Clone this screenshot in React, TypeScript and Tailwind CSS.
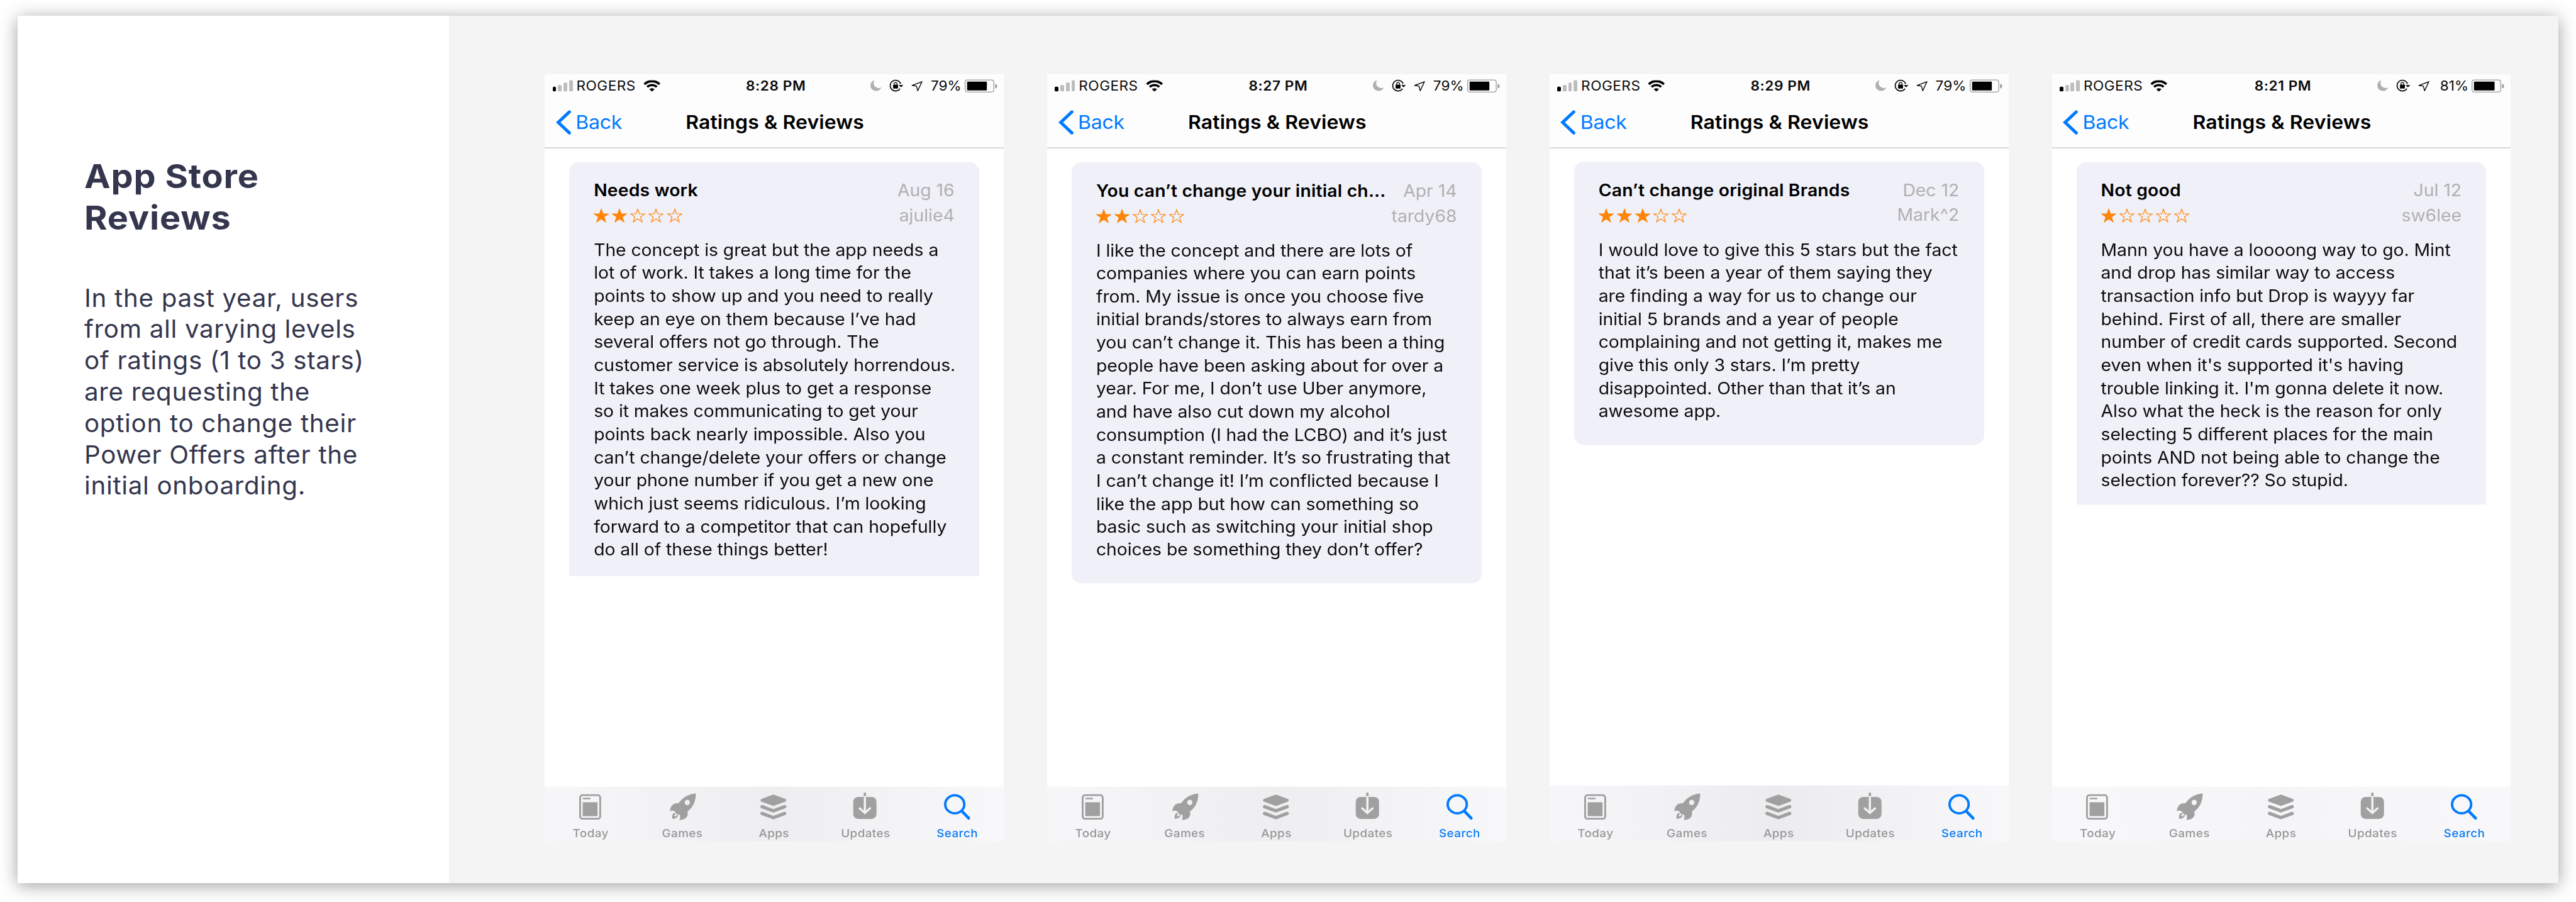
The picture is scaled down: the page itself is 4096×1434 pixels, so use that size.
import type { ReactNode } from "react";

type Review = {
  time: string;
  battery: string;
  charge: number;
  title: string;
  date: string;
  author: string;
  stars: number;
  lines: string[];
  cardClass: string;
  tabClass: string;
};

const reviews: Review[] = [
  {
    time: "8:28 PM",
    battery: "79%",
    charge: 136,
    title: "Needs work",
    date: "Aug 16",
    author: "ajulie4",
    stars: 2,
    lines: [
      "The concept is great but the app needs a",
      "lot of work. It takes a long time for the",
      "points to show up and you need to really",
      "keep an eye on them because I’ve had",
      "several offers not go through. The",
      "customer service is absolutely horrendous.",
      "It takes one week plus to get a response",
      "so it makes communicating to get your",
      "points back nearly impossible. Also you",
      "can’t change/delete your offers or change",
      "your phone number if you get a new one",
      "which just seems ridiculous. I’m looking",
      "forward to a competitor that can hopefully",
      "do all of these things better!",
    ],
    cardClass: "mt-[23.5px] h-[700px] rounded-t-[16px]",
    tabClass: "h-[92px] from-[#f7f7fa] via-[#eeeef1] to-[#f8f8fb]",
  },
  {
    time: "8:27 PM",
    battery: "79%",
    charge: 136,
    title: "You can’t change your initial ch...",
    date: "Apr 14",
    author: "tardy68",
    stars: 2,
    lines: [
      "I like the concept and there are lots of",
      "companies where you can earn points",
      "from. My issue is once you choose five",
      "initial brands/stores to always earn from",
      "you can’t change it. This has been a thing",
      "people have been asking about for over a",
      "year. For me, I don’t use Uber anymore,",
      "and have also cut down my alcohol",
      "consumption (I had the LCBO) and it’s just",
      "a constant reminder. It’s so frustrating that",
      "I can’t change it! I’m conflicted because I",
      "like the app but how can something so",
      "basic such as switching your initial shop",
      "choices be something they don’t offer?",
    ],
    cardClass: "mt-[24.3px] h-[711.5px] rounded-[16px]",
    tabClass: "h-[92px] from-[#f7f7fa] via-[#eeeef1] to-[#f8f8fb]",
  },
  {
    time: "8:29 PM",
    battery: "79%",
    charge: 136,
    title: "Can’t change original Brands",
    date: "Dec 12",
    author: "Mark^2",
    stars: 3,
    lines: [
      "I would love to give this 5 stars but the fact",
      "that it’s been a year of them saying they",
      "are finding a way for us to change our",
      "initial 5 brands and a year of people",
      "complaining and not getting it, makes me",
      "give this only 3 stars. I’m pretty",
      "disappointed. Other than that it’s an",
      "awesome app.",
    ],
    cardClass: "mt-[23px] h-[478.5px] rounded-[16px]",
    tabClass: "h-[94.5px] from-[#f7f7fa] via-[#ececef] to-[#f8f8fb]",
  },
  {
    time: "8:21 PM",
    battery: "81%",
    charge: 142,
    title: "Not good",
    date: "Jul 12",
    author: "sw6lee",
    stars: 1,
    lines: [
      "Mann you have a loooong way to go. Mint",
      "and drop has similar way to access",
      "transaction info but Drop is wayyy far",
      "behind. First of all, there are smaller",
      "number of credit cards supported. Second",
      "even when it's supported it's having",
      "trouble linking it. I'm gonna delete it now.",
      "Also what the heck is the reason for only",
      "selecting 5 different places for the main",
      "points AND not being able to change the",
      "selection forever?? So stupid.",
    ],
    cardClass: "mt-[23.5px] h-[579px] rounded-t-[16px]",
    tabClass: "h-[92px] from-[#f8f8fa] via-[#f5f5f8] to-[#f8f8fa]",
  },
];

function SignalBars() {
  return (
    <div className="flex h-[19.6px] items-end gap-[2.9px]">
      <span className="h-[8.6px] w-[5.8px] rounded-[2px] bg-black" />
      <span className="h-[11.5px] w-[5.8px] rounded-[2px] bg-[#bdbdbd]" />
      <span className="h-[15.2px] w-[5.8px] rounded-[2px] bg-[#bdbdbd]" />
      <span className="h-[19.6px] w-[5.8px] rounded-[2px] bg-[#bdbdbd]" />
    </div>
  );
}

function WifiIcon() {
  return (
    <svg className="h-[19.7px] w-[27.4px]" viewBox="0 0 28 20" preserveAspectRatio="none" fill="none" stroke="#000">
      <path d="M1.7 7.1A17.2 17.2 0 0 1 26.3 7.1" strokeWidth="3.9" />
      <path d="M6.2 11.8A11 11 0 0 1 21.8 11.8" strokeWidth="3.7" />
      <path d="M14 19.8 9.8 15.5A6 6 0 0 1 18.2 15.5Z" fill="#000" stroke="none" />
    </svg>
  );
}

function StatusIcons() {
  return (
    <svg className="h-[39.3px] w-[87.7px]" viewBox="20 0 380 160" preserveAspectRatio="none" fill="none">
      <path d="M56 41C40 47 29 60 29 77c0 21 17 38 39 38 17 0 30-10 36-24-6 3-11 4-17 4-20 0-36-15-36-34 0-7 2-14 5-20Z" fill="#b0b0b0" />
      <path d="M237 66A37 37 0 1 0 233 99" stroke="#000" strokeWidth="7" />
      <path d="M223 75H256L240 90Z" fill="#000" />
      <rect x="185" y="71" width="34" height="28" rx="3" fill="#000" />
      <path d="M192 73V67a10 10 0 0 1 20 0V73" stroke="#000" strokeWidth="5" />
      <path d="M384 51 316 77 346 82 355 114Z" stroke="#000" strokeWidth="6" strokeLinejoin="round" />
    </svg>
  );
}

function BatteryIcon({ charge }: { charge: number }) {
  return (
    <svg className="h-[39.3px] w-[55.4px]" viewBox="670 0 240 160" preserveAspectRatio="none" fill="none">
      <rect x="681.5" y="39.5" width="197" height="83" rx="15" stroke="#999" strokeWidth="5.5" />
      <rect x="695" y="51" width={charge} height="60" rx="4" fill="#000" />
      <path d="M888 66C898 69 902 75 902 82S898 95 888 98Z" fill="#999" />
    </svg>
  );
}

function Star({ filled }: { filled: boolean }) {
  return (
    <svg className="h-[24px] w-[24px]" viewBox="0.4 0.3 23.2 23.2">
      <path
        d="M12 1.4 14.6 9.2H23L16.3 14.2 18.8 22.2 12 17.3 5.2 22.2 7.7 14.2 1 9.2H9.4Z"
        fill={filled ? "#ff840a" : "none"}
        stroke="#ff840a"
        strokeWidth="1.2"
      />
    </svg>
  );
}

function TabIcon({ children }: { children: ReactNode }) {
  return (
    <svg className="h-[50.6px] w-[58.4px]" viewBox="0 0 30 26" fill="none">
      {children}
    </svg>
  );
}

function Tab({ label, active, children }: { label: string; active?: boolean; children: ReactNode }) {
  return (
    <div className="flex flex-1 flex-col items-center">
      <TabIcon>{children}</TabIcon>
      <span
        className={
          active
            ? "mt-[9.3px] text-[18.9px] leading-[24px] font-medium tracking-[0.4px] text-[#0a7cf5]"
            : "mt-[9.3px] text-[18.9px] leading-[24px] font-medium tracking-[0.4px] text-[#979797]"
        }
      >
        {label}
      </span>
    </div>
  );
}

function TabBar({ className }: { className: string }) {
  return (
    <nav className={`mt-auto flex items-end bg-linear-to-r pr-[1px] pb-[1.4px] ${className}`}>
      <Tab label="Today">
        <rect x="6.4" y="3.7" width="16.4" height="20.6" rx="2" stroke="#a0a0a0" strokeWidth="1.5" />
        <rect x="8.5" y="6" width="6.5" height="1.4" rx="0.7" fill="#a0a0a0" />
        <rect x="8.5" y="9.9" width="12.1" height="12.1" fill="#a0a0a0" />
      </Tab>
      <Tab label="Games">
        <g transform="translate(-0.27 -2.26) scale(0.11858 0.1262)" fill="#a0a0a0">
          <path
            fillRule="evenodd"
            d="M221 36C190 37 152 52 130 72C117 84 108 95 100 104C85 102 68 106 58 117C48 128 43 142 42 159C50 154 60 154 68 156C76 158 82 163 82 170L88 177C94 181 104 181 109 181C114 190 113 205 108 218C125 218 142 213 153 204C165 194 167 178 163 160C174 151 190 137 201 118C214 96 221 66 221 36ZM162 80a18 18 0 1 1 0 36a18 18 0 1 1 0-36Z"
          />
          <path d="M75 169C60 172 56 190 58 210C76 212 93 205 99 187L96 179C90 187 82 195 76 194C70 192 73 183 81 179Z" />
        </g>
      </Tab>
      <Tab label="Apps">
        <g stroke="#a0a0a0" strokeLinejoin="round" strokeLinecap="round">
          <path d="M14.8 4.6 23.9 8.2 14.8 11.8 5.6 8.2Z" fill="#a0a0a0" strokeWidth="2.6" />
          <path d="M5.6 13.8 14.8 17.4 23.9 13.8M5.6 19.7 14.8 23.3 23.9 19.7" strokeWidth="2.9" />
        </g>
      </Tab>
      <Tab label="Updates">
        <rect x="5" y="5.3" width="19" height="19.1" rx="4" fill="#a0a0a0" />
        <path d="M14.5 2.3V5.3" stroke="#a0a0a0" strokeWidth="1.9" strokeLinecap="round" />
        <path d="M14.5 5.3V18.8M10.3 15.2 14.5 19.2 18.7 15.2" stroke="#f1f1f4" strokeWidth="1.8" strokeLinecap="round" />
      </Tab>
      <Tab label="Search" active>
        <circle cx="12.9" cy="11.7" r="7.8" stroke="#007aff" strokeWidth="2" />
        <path d="M18.8 17.8 24.3 23.8" stroke="#007aff" strokeWidth="2.4" strokeLinecap="round" />
      </Tab>
    </nav>
  );
}

function Phone({ review }: { review: Review }) {
  return (
    <article className="h-[1219.5px] w-[729.6px] shrink-0">
      {/* The screens are shown slightly flattened: 667pt tall content in a shorter frame. */}
      <div className="flex h-[1297.4px] w-[729.6px] origin-top scale-y-[0.94] flex-col bg-white">
        <header className="h-[125px] border-b border-[#aeaeb0] bg-[#fdfdfd]">
          <div className="grid h-[39px] grid-cols-[1fr_auto_1fr] text-[22.6px] leading-[40px] text-[#0a0a0a]">
            <div className="flex items-start pl-[12.3px]">
              <div className="pt-[9.8px]">
                <SignalBars />
              </div>
              <span className="ml-[6px] tracking-[0.5px]">ROGERS</span>
              <div className="ml-[12px] pt-[9.5px]">
                <WifiIcon />
              </div>
            </div>
            <span className="pl-[5px] font-semibold tracking-[0.6px]">{review.time}</span>
            <div className="flex items-start justify-end pr-[8.6px]">
              <StatusIcons />
              <span className="w-[62.3px] pr-[3.2px] text-right">{review.battery}</span>
              <BatteryIcon charge={review.charge} />
            </div>
          </div>
          <div className="grid h-[85.6px] grid-cols-[1fr_auto_1fr] text-[32px] leading-[85.6px]">
            <div className="flex items-center pl-[17.5px] text-[#007aff]">
              <svg className="h-[41px] w-[24px]" viewBox="0 0 24 41" fill="none">
                <path d="M21.3 2.7 3.7 20.5 21.3 38.3" stroke="currentColor" strokeWidth="5.2" strokeLinecap="round" />
              </svg>
              <span className="ml-[7.3px] tracking-[-0.2px]">Back</span>
            </div>
            <h2 className="pl-[1.8px] font-semibold tracking-[0.1px] text-black">Ratings &amp; Reviews</h2>
          </div>
        </header>

        <section className={`mx-[39px] bg-[#f0f0f8] pt-[26.8px] pr-[39.3px] pl-[38.8px] text-[28.3px] ${review.cardClass}`}>
          <div className="flex justify-between leading-[42.6px]">
            <h3 className="font-semibold tracking-[0.2px] text-black">{review.title}</h3>
            <span className="text-[#b0b0b2]">{review.date}</span>
          </div>
          <div className="flex items-center justify-between leading-[42.6px]">
            <div className="flex gap-[5.1px]">
              {[0, 1, 2, 3, 4].map((i) => (
                <Star key={i} filled={i < review.stars} />
              ))}
            </div>
            <span className="text-[#b0b0b2]">{review.author}</span>
          </div>
          <p className="mt-[18px] leading-[38.93px] tracking-[-0.04px] text-[#0c0c0d]">
            {review.lines.map((line) => (
              <span key={line} className="block">
                {line}
              </span>
            ))}
          </p>
        </section>

        <TabBar className={review.tabClass} />
      </div>
    </article>
  );
}

export default function App() {
  return (
    <div className="h-[1434px] w-[4096px] overflow-hidden bg-white pt-[24.6px] pl-[27.7px] font-['Inter',sans-serif] whitespace-nowrap">
      <main className="flex h-[1379px] w-[4040.5px] bg-[#f4f4f4] shadow-[0_4px_26px_rgba(0,0,0,0.38)]">
        <aside className="w-[686.5px] shrink-0 bg-white pt-[222.3px] pl-[106.5px] text-[#34364e]">
          <h1 className="origin-top-left scale-x-[1.064] text-[52.4px] leading-[66.2px] font-bold tracking-[0.8px]">
            App Store
            <br />
            Reviews
          </h1>
          <p className="mt-[70.3px] origin-top-left scale-x-[1.02] text-[39.5px] leading-[49.8px] tracking-[0.68px]">
            In the past year, users
            <br />
            from all varying levels
            <br />
            of ratings (1 to 3 stars)
            <br />
            are requesting the
            <br />
            option to change their
            <br />
            Power Offers after the
            <br />
            initial onboarding.
          </p>
        </aside>
        <div className="flex gap-[69.2px] pt-[93.1px] pl-[152.2px]">
          {reviews.map((review) => (
            <Phone key={review.author} review={review} />
          ))}
        </div>
      </main>
    </div>
  );
}
